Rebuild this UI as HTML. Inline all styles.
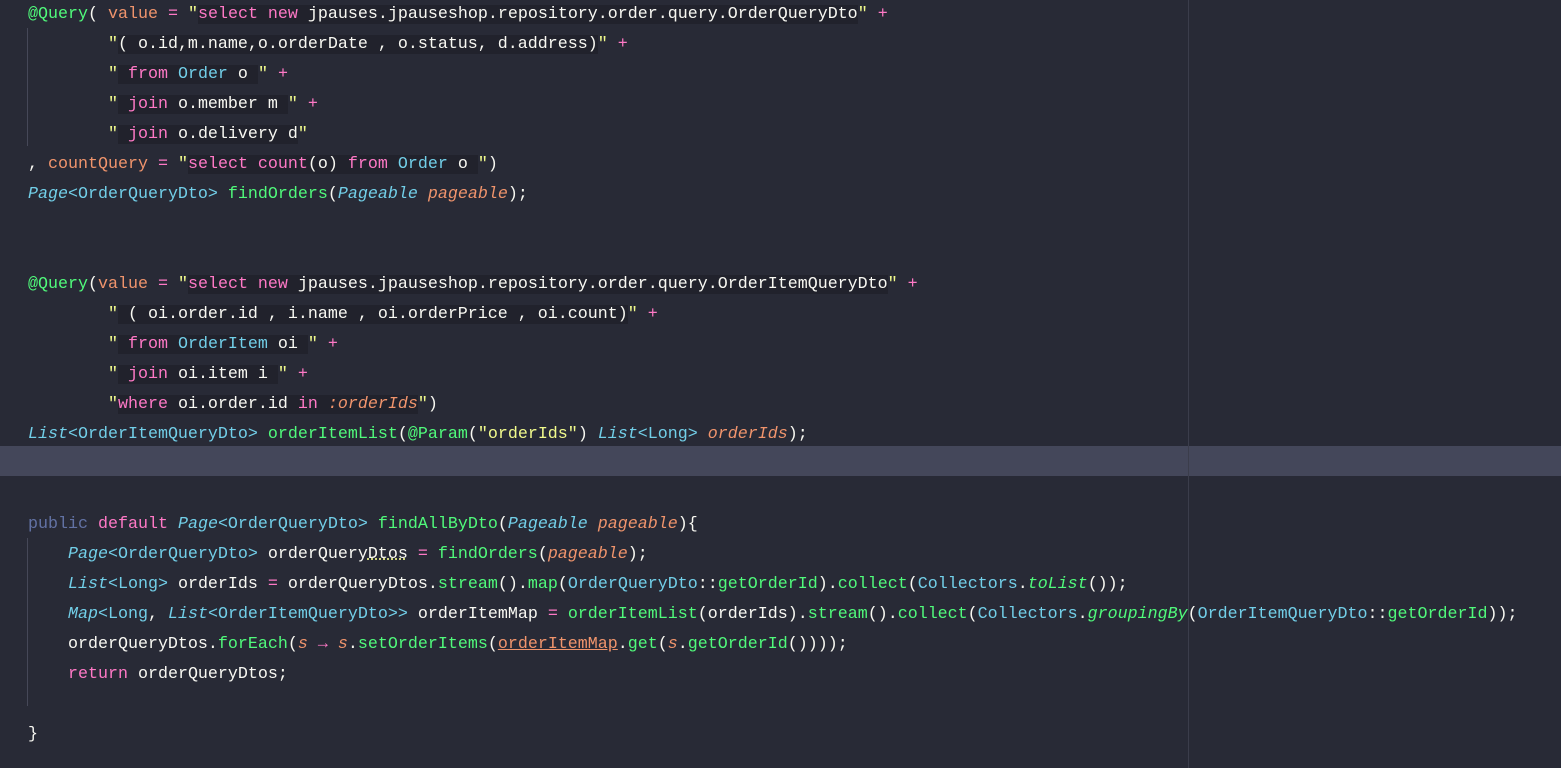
<!DOCTYPE html>
<html><head><meta charset="utf-8"><style>
body{margin:0;background:#282a36;width:1561px;height:768px;overflow:hidden;position:relative}
.hl{position:absolute;left:0;top:446px;width:1561px;height:30px;background:#44475a}
.rm{position:absolute;left:1188px;top:0;width:1px;height:768px;background:#3b3d4b}
.g1{position:absolute;left:27px;top:28px;width:1px;height:118px;background:#464858}
.g2{position:absolute;left:27px;top:538px;width:1px;height:168px;background:#464858}
pre{position:absolute;left:28px;top:0px;margin:0;font-family:"Liberation Mono",monospace;font-size:16.67px;line-height:30px;color:#f8f8f2}
.s{background:#21222c}
.a{color:#50fa7b}.o{color:#f0946c}.p{color:#ff79c6}.y{color:#f1fa8c}.c{color:#72cfe8}.gr{color:#50fa7b}
.i{font-style:italic}.k{color:#6272a4}.u{text-decoration:underline}
</style></head><body>
<div class="hl"></div><div class="rm"></div><div class="g1"></div><div class="g2"></div>
<pre><span class="a">@Query</span>( <span class="o">value</span> <span class="p">=</span> <span class="y">"</span><span class="s"><span class="p">select new</span> jpauses.jpauseshop.repository.order.query.OrderQueryDto</span><span class="y">"</span> <span class="p">+</span>
        <span class="y">"</span><span class="s">( o.id,m.name,o.orderDate , o.status, d.address)</span><span class="y">"</span> <span class="p">+</span>
        <span class="y">"</span><span class="s"> <span class="p">from</span> <span class="c">Order</span> o </span><span class="y">"</span> <span class="p">+</span>
        <span class="y">"</span><span class="s"> <span class="p">join</span> o.member m </span><span class="y">"</span> <span class="p">+</span>
        <span class="y">"</span><span class="s"> <span class="p">join</span> o.delivery d</span><span class="y">"</span>
, <span class="o">countQuery</span> <span class="p">=</span> <span class="y">"</span><span class="s"><span class="p">select count</span>(o) <span class="p">from</span> <span class="c">Order</span> o </span><span class="y">"</span>)
<span class="c i">Page</span><span class="c">&lt;OrderQueryDto&gt;</span> <span class="gr">findOrders</span>(<span class="c i">Pageable</span> <span class="o i">pageable</span>);


<span class="a">@Query</span>(<span class="o">value</span> <span class="p">=</span> <span class="y">"</span><span class="s"><span class="p">select new</span> jpauses.jpauseshop.repository.order.query.OrderItemQueryDto</span><span class="y">"</span> <span class="p">+</span>
        <span class="y">"</span><span class="s"> ( oi.order.id , i.name , oi.orderPrice , oi.count)</span><span class="y">"</span> <span class="p">+</span>
        <span class="y">"</span><span class="s"> <span class="p">from</span> <span class="c">OrderItem</span> oi </span><span class="y">"</span> <span class="p">+</span>
        <span class="y">"</span><span class="s"> <span class="p">join</span> oi.item i </span><span class="y">"</span> <span class="p">+</span>
        <span class="y">"</span><span class="s"><span class="p">where</span> oi.order.id <span class="p">in</span> <span class="o i">:orderIds</span></span><span class="y">"</span>)
<span class="c i">List</span><span class="c">&lt;OrderItemQueryDto&gt;</span> <span class="gr">orderItemList</span>(<span class="a">@Param</span>(<span class="y">"orderIds"</span>) <span class="c i">List</span><span class="c">&lt;Long&gt;</span> <span class="o i">orderIds</span>);


<span class="k">public</span> <span class="p">default</span> <span class="c i">Page</span><span class="c">&lt;OrderQueryDto&gt;</span> <span class="gr">findAllByDto</span>(<span class="c i">Pageable</span> <span class="o i">pageable</span>){
    <span class="c i">Page</span><span class="c">&lt;OrderQueryDto&gt;</span> orderQuery<span class="u" style="text-decoration-style:dotted;text-decoration-color:#f1fa8c">Dtos</span> <span class="p">=</span> <span class="gr">findOrders</span>(<span class="o i">pageable</span>);
    <span class="c i">List</span><span class="c">&lt;Long&gt;</span> orderIds <span class="p">=</span> orderQueryDtos.<span class="gr">stream</span>().<span class="gr">map</span>(<span class="c">OrderQueryDto</span>::<span class="gr">getOrderId</span>).<span class="gr">collect</span>(<span class="c">Collectors</span>.<span class="gr i">toList</span>());
    <span class="c i">Map</span><span class="c">&lt;Long</span>, <span class="c i">List</span><span class="c">&lt;OrderItemQueryDto&gt;&gt;</span> orderItemMap <span class="p">=</span> <span class="gr">orderItemList</span>(orderIds).<span class="gr">stream</span>().<span class="gr">collect</span>(<span class="c">Collectors</span>.<span class="gr i">groupingBy</span>(<span class="c">OrderItemQueryDto</span>::<span class="gr">getOrderId</span>));
    orderQueryDtos.<span class="gr">forEach</span>(<span class="o i">s</span> <span class="p">→</span> <span class="o i">s</span>.<span class="gr">setOrderItems</span>(<span class="o u">orderItemMap</span>.<span class="gr">get</span>(<span class="o i">s</span>.<span class="gr">getOrderId</span>())));
    <span class="p">return</span> orderQueryDtos;

}</pre>
</body></html>
